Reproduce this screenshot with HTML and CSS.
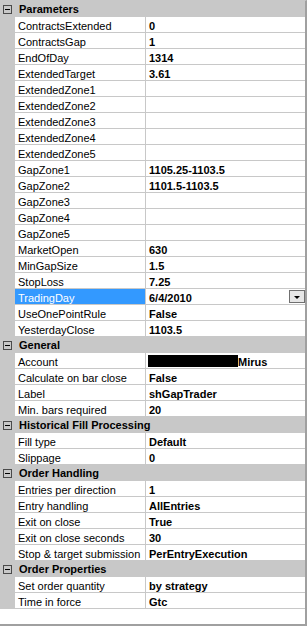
FILE: index.html
```html
<!DOCTYPE html>
<html lang="en">
<head>
    <meta charset="UTF-8">
    <meta name="viewport" content="width=device-width, initial-scale=1.0">
    <title>Strategy Properties</title>
    <link rel="stylesheet" href="styles.css">
</head>
<body>
    <div class="grid">
        <div class="cat"><span class="toggle"><span class="minus"></span></span>Parameters</div>
        <div class="row"><div class="name">ContractsExtended</div><div class="value">0</div></div>
        <div class="row"><div class="name">ContractsGap</div><div class="value">1</div></div>
        <div class="row"><div class="name">EndOfDay</div><div class="value">1314</div></div>
        <div class="row"><div class="name">ExtendedTarget</div><div class="value">3.61</div></div>
        <div class="row"><div class="name">ExtendedZone1</div><div class="value"></div></div>
        <div class="row"><div class="name">ExtendedZone2</div><div class="value"></div></div>
        <div class="row"><div class="name">ExtendedZone3</div><div class="value"></div></div>
        <div class="row"><div class="name">ExtendedZone4</div><div class="value"></div></div>
        <div class="row"><div class="name">ExtendedZone5</div><div class="value"></div></div>
        <div class="row"><div class="name">GapZone1</div><div class="value">1105.25-1103.5</div></div>
        <div class="row"><div class="name">GapZone2</div><div class="value">1101.5-1103.5</div></div>
        <div class="row"><div class="name">GapZone3</div><div class="value"></div></div>
        <div class="row"><div class="name">GapZone4</div><div class="value"></div></div>
        <div class="row"><div class="name">GapZone5</div><div class="value"></div></div>
        <div class="row"><div class="name">MarketOpen</div><div class="value">630</div></div>
        <div class="row"><div class="name">MinGapSize</div><div class="value">1.5</div></div>
        <div class="row"><div class="name">StopLoss</div><div class="value">7.25</div></div>
        <div class="row selected"><div class="name">TradingDay</div><div class="value">6/4/2010<span class="drop"><span class="arrow"></span></span></div></div>
        <div class="row"><div class="name">UseOnePointRule</div><div class="value">False</div></div>
        <div class="row"><div class="name">YesterdayClose</div><div class="value">1103.5</div></div>

        <div class="cat"><span class="toggle"><span class="minus"></span></span>General</div>
        <div class="row"><div class="name">Account</div><div class="value"><span class="redact"></span>Mirus</div></div>
        <div class="row"><div class="name">Calculate on bar close</div><div class="value">False</div></div>
        <div class="row"><div class="name">Label</div><div class="value">shGapTrader</div></div>
        <div class="row"><div class="name">Min. bars required</div><div class="value">20</div></div>

        <div class="cat"><span class="toggle"><span class="minus"></span></span>Historical Fill Processing</div>
        <div class="row"><div class="name">Fill type</div><div class="value">Default</div></div>
        <div class="row"><div class="name">Slippage</div><div class="value">0</div></div>

        <div class="cat"><span class="toggle"><span class="minus"></span></span>Order Handling</div>
        <div class="row"><div class="name">Entries per direction</div><div class="value">1</div></div>
        <div class="row"><div class="name">Entry handling</div><div class="value">AllEntries</div></div>
        <div class="row"><div class="name">Exit on close</div><div class="value">True</div></div>
        <div class="row"><div class="name">Exit on close seconds</div><div class="value">30</div></div>
        <div class="row"><div class="name">Stop &amp; target submission</div><div class="value">PerEntryExecution</div></div>

        <div class="cat"><span class="toggle"><span class="minus"></span></span>Order Properties</div>
        <div class="row"><div class="name">Set order quantity</div><div class="value">by strategy</div></div>
        <div class="row"><div class="name">Time in force</div><div class="value">Gtc</div></div>
    </div>
</body>
</html>
```

FILE: styles.css
```css
body {
    margin: 0;
    font-family: "Liberation Sans", Arial, sans-serif;
    font-size: 11px;
    color: #000;
}
.grid {
    width: 305px;
    height: 623px;
    background-color: #fff;
    border-top: 1px solid #c8c8c8;
    border-right: 2px solid #a0a0a0;
    border-bottom: 2px solid #a0a0a0;
    overflow: hidden;
}
.cat {
    display: flex;
    align-items: flex-start;
    height: 16px;
    line-height: 16px;
    background-color: #c8c8c8;
    font-weight: bold;
    white-space: nowrap;
}
.toggle {
    display: flex;
    align-items: center;
    justify-content: center;
    width: 9px;
    height: 9px;
    box-sizing: border-box;
    margin: 4px 7px 0 3px;
    border: 1px solid #4a4a4a;
}
.minus {
    width: 5px;
    height: 1px;
    background-color: #000;
}
.row {
    display: flex;
    height: 16px;
    background-color: #c8c8c8;
}
.name {
    width: 130px;
    box-sizing: border-box;
    margin: 0 1px 1px 15px;
    padding: 2px 0 0 3px;
    line-height: 14px;
    background-color: #fff;
    white-space: nowrap;
    overflow: hidden;
}
.value {
    display: flex;
    flex: 1;
    margin-bottom: 1px;
    padding: 2px 0 0 3px;
    line-height: 14px;
    background-color: #fff;
    font-weight: bold;
    white-space: nowrap;
    overflow: hidden;
}
.row.selected .name {
    background-color: #3399ff;
    color: #fff;
}
.drop {
    display: flex;
    align-items: center;
    justify-content: center;
    width: 16px;
    height: 13px;
    box-sizing: border-box;
    margin: -1px 0 0 auto;
    border: 1px solid #707070;
    background-color: #e6e6e6;
}
.arrow {
    width: 0;
    height: 0;
    border-left: 3px solid transparent;
    border-right: 3px solid transparent;
    border-top: 3px solid #000;
    margin-top: 1px;
}
.redact {
    align-self: flex-start;
    width: 90px;
    height: 12px;
    margin: 0 0 0 -1px;
    background-color: #000;
}
```
